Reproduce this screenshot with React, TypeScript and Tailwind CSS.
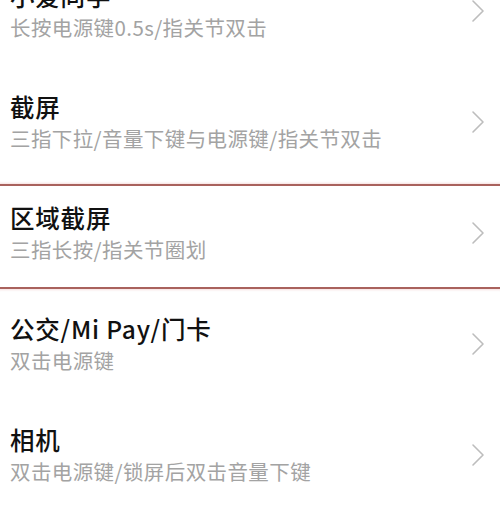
import React from "react";

const rows = [
  { title: "小爱同学", sub: "长按电源键0.5s/指关节双击" },
  { title: "截屏", sub: "三指下拉/音量下键与电源键/指关节双击" },
  { title: "区域截屏", sub: "三指长按/指关节圈划", marked: true },
  { title: "公交/Mi Pay/门卡", sub: "双击电源键" },
  { title: "相机", sub: "双击电源键/锁屏后双击音量下键" },
  { title: "", sub: "" },
];

function Chevron() {
  return (
    <svg width="14" height="24" viewBox="0 0 14 24" fill="none" className="shrink-0">
      <path d="M2 2 L12 12 L2 22" stroke="#bdbdbd" strokeWidth="1.6" strokeLinecap="round" strokeLinejoin="round" />
    </svg>
  );
}

export default function App() {
  return (
    <div
      className="w-[500px] h-[528px] overflow-hidden bg-white"
      style={{ fontFamily: '"Noto Sans CJK SC", "Noto Sans", sans-serif' }}
    >
      <div className="mt-[-45px] flex flex-col">
        {rows.map((r, i) => (
          <div key={i} className="relative h-[111px] flex items-center pl-[10px] pr-[15px]">
            <div className="flex-1 flex flex-col">
              <div className="text-[24.5px] leading-[30px] font-medium text-[#111] tracking-[0.8px]">{r.title}</div>
              <div className="mt-[2px] text-[20.5px] leading-[28px] text-[#a3a3a3] tracking-[0.4px]">{r.sub}</div>
            </div>
            {r.title && <Chevron />}
            {r.marked && (
              <div className="absolute left-0 right-0 top-[7px] bottom-[-1px] border-y-2 border-[#a9625d] shadow-[0_0_2px_1px_rgba(230,160,160,0.35)] pointer-events-none" />
            )}
          </div>
        ))}
      </div>
    </div>
  );
}
